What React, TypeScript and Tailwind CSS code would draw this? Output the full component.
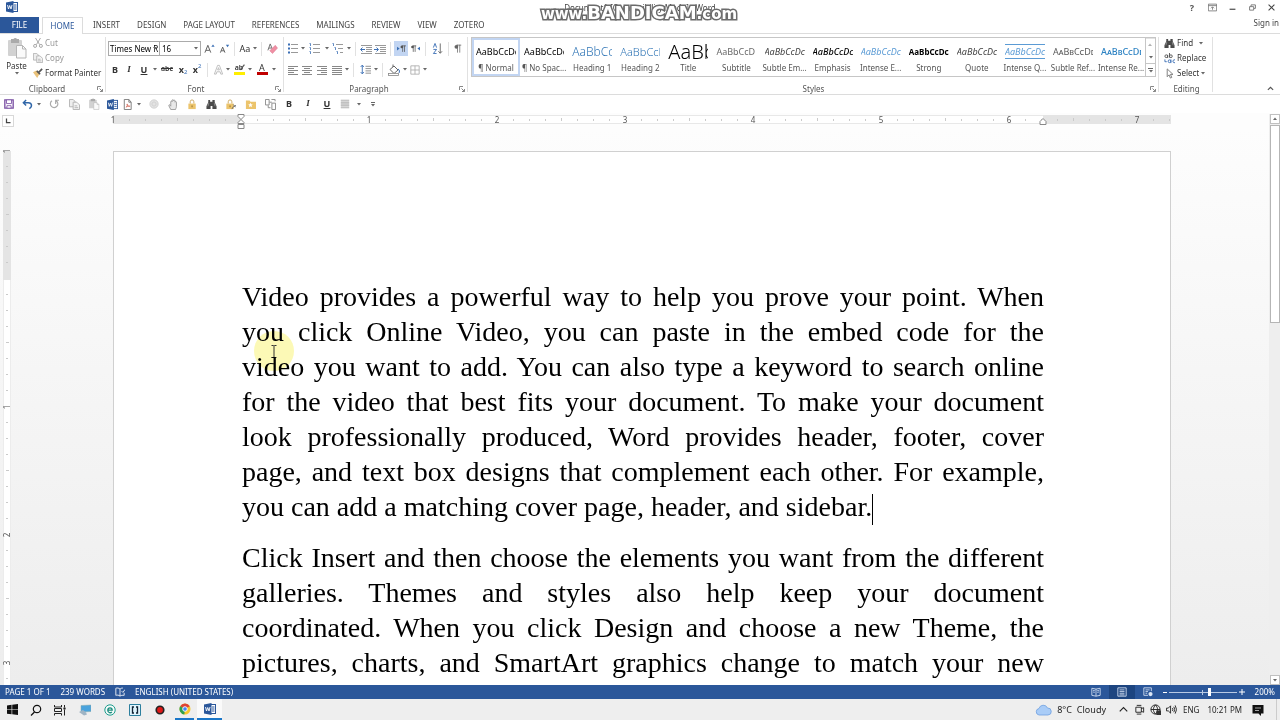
import type { ReactNode } from "react";

const TABS = ["INSERT", "DESIGN", "PAGE LAYOUT", "REFERENCES", "MAILINGS", "REVIEW", "VIEW", "ZOTERO"];

const STYLES = [
  { label: "¶ Normal", sample: "AaBbCcDc", look: "text-[9px] text-black" },
  { label: "¶ No Spac...", sample: "AaBbCcDc", look: "text-[9px] text-black" },
  { label: "Heading 1", sample: "AaBbCc", look: "text-[12px] font-light text-[#2e74b5]" },
  { label: "Heading 2", sample: "AaBbCcD", look: "text-[11px] font-light text-[#2e74b5]" },
  { label: "Title", sample: "AaBb", look: "text-[20px] font-light text-black" },
  { label: "Subtitle", sample: "AaBbCcD", look: "text-[9px] text-[#6a6a6a]" },
  { label: "Subtle Em...", sample: "AaBbCcDc", look: "text-[9px] italic text-[#404040]" },
  { label: "Emphasis", sample: "AaBbCcDc", look: "text-[9px] italic font-medium text-black" },
  { label: "Intense E...", sample: "AaBbCcDc", look: "text-[9px] italic text-[#5b9bd5]" },
  { label: "Strong", sample: "AaBbCcDc", look: "text-[8px] font-bold text-black" },
  { label: "Quote", sample: "AaBbCcDc", look: "text-[9px] italic text-[#404040]" },
  { label: "Intense Q...", sample: "AaBbCcDc", look: "text-[9px] italic text-[#5b9bd5] border-y border-[#5b9bd5]" },
  { label: "Subtle Ref...", sample: "AaBbCcDd", look: "text-[9px] [font-variant-caps:small-caps] text-[#5a5a5a]" },
  { label: "Intense Re...", sample: "AaBbCcDd", look: "text-[9px] [font-variant-caps:small-caps] font-medium text-[#2e83c3]" },
];

const PARAGRAPHS = [
  [
    "Video provides a powerful way to help you prove your point. When",
    "you click Online Video, you can paste in the embed code for the",
    "video you want to add. You can also type a keyword to search online",
    "for the video that best fits your document. To make your document",
    "look professionally produced, Word provides header, footer, cover",
    "page, and text box designs that complement each other. For example,",
    "you can add a matching cover page, header, and sidebar.",
  ],
  [
    "Click Insert and then choose the elements you want from the different",
    "galleries. Themes and styles also help keep your document",
    "coordinated. When you click Design and choose a new Theme, the",
    "pictures, charts, and SmartArt graphics change to match your new",
  ],
];

function Svg({ children, size = "size-3", box = "0 0 12 12" }: { children: ReactNode; size?: string; box?: string }) {
  return (
    <svg viewBox={box} className={`${size} shrink-0`} fill="none" stroke="#666" strokeWidth="1" aria-hidden="true">
      {children}
    </svg>
  );
}

function Tool({ name, w = "w-[14px]", on, children }: { name: string; w?: string; on?: boolean; children: ReactNode }) {
  return (
    <button
      aria-label={name}
      className={`${w} ${on ? "bg-[#c2d5f2]" : ""} h-[15px] shrink-0 flex items-center justify-center`}
    >
      {children}
    </button>
  );
}

function Caret({ name }: { name: string }) {
  return (
    <button aria-label={`${name} options`} className="w-[6px] h-[15px] shrink-0 flex items-center justify-center">
      <CaretMark />
    </button>
  );
}

function CaretMark() {
  return (
    <svg viewBox="0 0 4 3" className="w-1 h-[3px] shrink-0" aria-hidden="true">
      <path d="M0 0h4L2 2.6z" fill="#666" />
    </svg>
  );
}

function Sep() {
  return <span className="w-px h-[14px] mx-[3px] shrink-0 bg-[#e1e1e1]" />;
}

function Launcher({ name }: { name: string }) {
  return (
    <button aria-label={`${name} dialog`} className="absolute right-[3px] bottom-[2px]">
      <Svg size="size-[6px]" box="0 0 6 6">
        <path d="M.5 4V.5H4M2.5 2.5l3 3M5.5 3v2.5H3" stroke="#888" />
      </Svg>
    </button>
  );
}

function Group({ name, w, launcher, children }: { name: string; w: string; launcher?: boolean; children: ReactNode }) {
  return (
    <section className={`${w} relative h-[60px] pt-[3px] flex flex-col justify-between`}>
      {children}
      <h2 className="text-center leading-[10px] text-[#555]">{name}</h2>
      {launcher && <Launcher name={name} />}
      <span className="absolute right-0 top-[3px] bottom-[2px] w-px bg-[#e1e1e1]" />
    </section>
  );
}

function Lines({ xs }: { xs: [number, number][] }) {
  return (
    <Svg>
      {xs.map(([a, b], i) => (
        <path key={i} d={`M${a} ${2.5 + i * 2}H${b}`} stroke="#888" />
      ))}
    </Svg>
  );
}

function ListIcon({ kind }: { kind: "bullets" | "numbers" | "levels" }) {
  const indent = kind === "levels" ? [0, 2, 4] : [0, 0, 0];
  return (
    <Svg>
      {[1.5, 5.5, 9.5].map((y, i) => (
        <g key={y}>
          <path d={`M${4 + indent[i]} ${y}H11`} stroke="#999" />
          {kind === "bullets" ? (
            <rect x="1" y={y - 1} width="2" height="2" fill="#3b6fb5" stroke="none" />
          ) : (
            <path d={`M${indent[i] + 0.5} ${y - 1}h1v2.500`} stroke="#3b6fb5" strokeWidth=".8" />
          )}
        </g>
      ))}
    </Svg>
  );
}

function IndentIcon({ out }: { out?: boolean }) {
  return (
    <Svg>
      <path d="M1 2.500h11M6 4.500h6M6 6.500h6M6 8.500h6M1 10.500h11" stroke="#999" />
      <path d={out ? "M5 6.500H.8M2.500 4.500L.6 6.500l1.900 2" : "M0 6.500h4.200M2.500 4.500l1.900 2-1.900 2"} stroke="#3b6fb5" />
    </Svg>
  );
}

function CopyIcon({ size = "size-3" }: { size?: string }) {
  return (
    <Svg size={size}>
      <path d="M.5.5h4l2 2v6h-6z" fill="#eee" stroke="#b0b0b0" />
      <path d="M4.500 3.500h4l3 3v5h-7z" fill="#f4f4f4" stroke="#b0b0b0" />
      <path d="M6 7.500h3M6 9.500h4" stroke="#b0b0b0" />
    </Svg>
  );
}

function PasteIcon({ size = "size-3" }: { size?: string }) {
  return (
    <Svg size={size} box="0 0 20 22">
      <rect x="1" y="3" width="14" height="16" rx="1" fill="#d2d2d2" stroke="none" />
      <path d="M4 2h2.500a2 2 0 013.500 0H12v4H4z" fill="#aaa" stroke="none" />
      <path d="M9.500 8.500h6l3.500 3.500v9H9.500z" fill="#fafafa" stroke="#b5b5b5" />
      <path d="M15.500 8.500V12H19" stroke="#b5b5b5" />
    </Svg>
  );
}

function WordIcon({ size = "size-3" }: { size?: string }) {
  return (
    <Svg size={size}>
      <rect x="5.500" y="1.500" width="6" height="9" fill="#fff" stroke="#2b579a" />
      <path d="M8 4h2.500M8 6h2.500M8 8h2.500" stroke="#2b579a" />
      <path d="M0 1.500L7.500 0v12L0 10.500z" fill="#2b579a" stroke="none" />
      <path d="M1.500 4l1 4 1.200-3.500L5 8l1-4" stroke="#fff" strokeWidth=".9" />
    </Svg>
  );
}

function Binoculars() {
  return (
    <Svg size="size-[11px]">
      <path d="M2.500 1h2v2H7V1h2.500v2.500L11.500 8v3H7V7.500H5V11H.5V8l2-4.500z" fill="#4a4a4a" stroke="none" />
      <path d="M3 4.500L2 8M9 4.500L10 8" stroke="#bbb" strokeWidth=".6" />
    </Svg>
  );
}

function Padlock({ pen }: { pen?: boolean }) {
  return (
    <Svg size="size-[11px]">
      <path d="M3.500 5V3a2 2 0 014 0v2" stroke="#c9a55c" />
      <rect x="1.500" y="5" width="8" height="6" fill="#ecc46c" stroke="none" />
      <rect x="5" y="7" width="1" height="2" fill="#8a6a2a" stroke="none" />
      {pen && <path d="M7.500 11l1.500-2.500 3-1.500M9 6l2.500 3" stroke="#666" />}
    </Svg>
  );
}

function TitleBar() {
  return (
    <header className="relative h-[17px] flex items-start justify-between">
      <span className="pl-[6px] pt-px">
        <WordIcon />
      </span>
      <h1 className="absolute inset-x-0 top-[2px] text-center leading-[12px] text-[#444]">
        Document1 [Compatibility Mode] - Word
      </h1>
      <div className="flex">
        <Tool name="Help" w="w-[20px]">
          <span className="text-[9px] font-bold text-[#555]">?</span>
        </Tool>
        <Tool name="Ribbon display options" w="w-[20px]">
          <Svg size="size-[9px]">
            <path d="M.5 1.500h11v9H.5zM.5 3.500h11M6 9V5.500M4 7l2-2 2 2" />
          </Svg>
        </Tool>
        <Tool name="Minimize" w="w-[20px]">
          <Svg size="size-[7px]">
            <path d="M1 9h10" stroke="#444" strokeWidth="2" />
          </Svg>
        </Tool>
        <Tool name="Restore" w="w-[20px]">
          <Svg size="size-[7px]">
            <path d="M1 4.500h7v6H1zM3.500 4V1.500h7.500v6H8.500" strokeWidth="1.400" />
          </Svg>
        </Tool>
        <Tool name="Close" w="w-[18px]">
          <Svg size="size-[7px]">
            <path d="M1 1l10 10M11 1L1 11" stroke="#444" strokeWidth="1.800" />
          </Svg>
        </Tool>
      </div>
      {/* Recorder watermark sits over the window title */}
      <div className="absolute inset-x-0 top-[4px] z-10 flex items-baseline justify-center pr-[2px] font-['DejaVu_Sans',sans-serif] font-bold leading-[18px] text-white [-webkit-text-stroke:3px_#6b6b6b] [paint-order:stroke_fill]">
        <span className="text-[15px]">www.</span>
        <span className="text-[18px]">BANDICAM</span>
        <span className="text-[15px]">.com</span>
      </div>
    </header>
  );
}

function TabStrip() {
  return (
    <nav className="h-[17px] flex items-end justify-between border-b border-[#dcdcdc] text-[#444]">
      <div className="flex h-[16px]">
        <button className="w-[39px] bg-[#2b579a] text-white">FILE</button>
        <button className="w-[41px] ml-[3px] h-[17px] bg-white border border-b-0 border-[#dcdcdc] text-[#2b579a]">HOME</button>
        <div className="flex ml-[10px] gap-[17px]">
          {TABS.map((t) => (
            <button key={t}>{t}</button>
          ))}
        </div>
      </div>
      <a href="#signin" className="self-start pr-px">Sign in</a>
    </nav>
  );
}

function Clipboard() {
  return (
    <Group name="Clipboard" w="w-[106px] pr-[12px]" launcher>
      <div className="flex">
        <button className="w-[33px] shrink-0 flex flex-col items-center">
          <PasteIcon size="h-[22px] w-[20px]" />
          <span className="leading-[13px]">Paste</span>
          <CaretMark />
        </button>
        <div className="flex flex-col items-start gap-[3px] whitespace-nowrap">
          <button className="flex items-center gap-[2px] h-3 text-[#999]">
            <Svg size="size-[10px]">
              <path d="M3 0l5 8M9 0L4 8" stroke="#999" />
              <circle cx="2.500" cy="9.500" r="1.800" stroke="#999" />
              <circle cx="9.500" cy="9.500" r="1.800" stroke="#999" />
            </Svg>
            Cut
          </button>
          <button className="flex items-center gap-[2px] h-3 text-[#999]">
            <CopyIcon size="size-[10px]" />
            Copy
          </button>
          <button className="flex items-center gap-[2px] h-3">
            <Svg size="size-[10px]">
              <path d="M0 5l4-2 4 4-3 5z" fill="#eac27a" stroke="none" />
              <path d="M4.500 3.500l4 4M6.500 5.500L11 1" stroke="#555" strokeWidth="2" />
            </Svg>
            Format Painter
          </button>
        </div>
      </div>
    </Group>
  );
}

function FontGroup() {
  return (
    <Group name="Font" w="w-[178px] pl-[2px]" launcher>
      <div className="flex flex-col gap-[6px]">
        <div className="flex items-center h-[15px] mt-[4px]">
          <div className="relative">
            <select aria-label="Font name" className="appearance-none w-[52px] h-[15px] pl-px border border-[#ababab] bg-white block text-black">
              <option>Times New R</option>
            </select>
            <span className="absolute right-[3px] top-[6px] flex pointer-events-none"><CaretMark /></span>
          </div>
          <div className="relative -ml-px">
            <select aria-label="Font size" className="appearance-none w-[42px] h-[15px] pl-[2px] border border-[#ababab] bg-white block text-black">
              <option>16</option>
            </select>
            <span className="absolute right-[3px] top-[6px] flex pointer-events-none"><CaretMark /></span>
          </div>
          <Tool name="Grow font" w="w-[16px]">
            <Svg size="size-[11px]">
              <path d="M1 10.500l3.200-8 3.200 8M2.200 8h4" stroke="#555" />
              <path d="M8 4L9.800 1.500 11.600 4z" fill="#3b6fb5" stroke="none" />
            </Svg>
          </Tool>
          <Tool name="Shrink font">
            <Svg size="size-[11px]">
              <path d="M1.500 10.500l2.500-6 2.500 6M2.500 8.500h3" stroke="#555" />
              <path d="M7.500 2h3.600L9.300 4.500z" fill="#3b6fb5" stroke="none" />
            </Svg>
          </Tool>
          <Sep />
          <Tool name="Change case"><span className="text-[9px]">Aa</span></Tool>
          <Caret name="Change case" />
          <Sep />
          <Tool name="Clear formatting">
            <Svg size="size-[11px]">
              <path d="M1 8l2.500-7L6 7M2 5.500h3" stroke="#666" />
              <path d="M3 8.500L9 2.500l2.500 3L6 11.500z" fill="#ef8fa3" stroke="#d9708a" strokeWidth=".5" />
            </Svg>
          </Tool>
        </div>
        <div className="flex items-center h-[15px] text-[9px] text-[#333]">
          <Tool name="Bold"><b>B</b></Tool>
          <Tool name="Italic"><i className="font-['Liberation_Serif',serif] font-bold">I</i></Tool>
          <Tool name="Underline" w="w-[16px]"><b className="underline">U</b></Tool>
          <Caret name="Underline" />
          <Tool name="Strikethrough" w="w-[18px]"><s className="text-[7px] font-semibold">abc</s></Tool>
          <Tool name="Subscript">
            <b>x</b><span className="text-[6px] self-end text-[#3b6fb5]">2</span>
          </Tool>
          <Tool name="Superscript">
            <b>x</b><span className="text-[6px] self-start text-[#3b6fb5]">2</span>
          </Tool>
          <Sep />
          <Tool name="Text effects">
            <Svg size="size-[11px]">
              <path d="M1.500 11L5 1.500h2L10.500 11h-2L7.800 8.500H4.200L3.500 11zM5 6.500h2L6 4z" stroke="#b5b5b5" strokeWidth=".9" />
            </Svg>
          </Tool>
          <Caret name="Text effects" />
          <Tool name="Highlight" w="w-[16px]">
            <span className="relative w-[11px] h-[11px] text-[7px] leading-[7px] font-semibold border-b-[3px] border-[#ffee00]">
              ab
              <span className="absolute right-0 top-0">
                <Svg size="size-[7px]"><path d="M11 1L4 10" stroke="#555" strokeWidth="2" /></Svg>
              </span>
            </span>
          </Tool>
          <Caret name="Highlight" />
          <Tool name="Font color" w="w-[18px]">
            <span className="w-[11px] h-[11px] text-[9px] leading-[8px] border-b-[3px] border-[#c00000]">A</span>
          </Tool>
          <Caret name="Font color" />
        </div>
      </div>
    </Group>
  );
}

function ParagraphGroup() {
  return (
    <Group name="Paragraph" w="w-[184px] pl-[2px] pr-[16px]" launcher>
      <div className="flex flex-col gap-[6px]">
        <div className="flex items-center h-[15px] mt-[4px]">
          <Tool name="Bullets"><ListIcon kind="bullets" /></Tool>
          <Caret name="Bullets" />
          <Tool name="Numbering" w="w-[18px]"><ListIcon kind="numbers" /></Tool>
          <Caret name="Numbering" />
          <Tool name="Multilevel list" w="w-[16px]"><ListIcon kind="levels" /></Tool>
          <Caret name="Multilevel list" />
          <Sep />
          <Tool name="Decrease indent"><IndentIcon out /></Tool>
          <Tool name="Increase indent"><IndentIcon /></Tool>
          <Sep />
          <Tool name="Left to right" on>
            <Svg size="size-[9px]">
              <path d="M0 3.500l3.500 2.500L0 8.500z" fill="#3b6fb5" stroke="none" />
              <path d="M7.500 2v8.500M10 2v8.500M6 2.500h6" stroke="#555" />
              <circle cx="6.500" cy="4" r="1.800" fill="#555" stroke="none" />
            </Svg>
          </Tool>
          <Tool name="Right to left">
            <Svg size="size-[9px]">
              <path d="M12 3.500L8.500 6 12 8.500z" fill="#3b6fb5" stroke="none" />
              <path d="M3 2v8.500M5.500 2v8.500M2 2.500h5" stroke="#555" />
              <circle cx="2" cy="4" r="1.800" fill="#555" stroke="none" />
            </Svg>
          </Tool>
          <Sep />
          <Tool name="Sort" w="w-[16px]">
            <Svg size="size-[11px]">
              <path d="M1.500 5l1.800-4.500L5 5M1.500 7h3.500L1.500 11.500H5" stroke="#3b6fb5" />
              <path d="M9 .5v10.500M7 9l2 2.200L11 9" stroke="#666" />
            </Svg>
          </Tool>
          <Sep />
          <Tool name="Show marks" w="w-[10px]">
            <Svg size="size-[9px]">
              <path d="M6 1v10.500M9 1v10.500M4.500 1.500h6.500" stroke="#666" />
              <circle cx="4.500" cy="3.700" r="2.500" fill="#666" stroke="none" />
            </Svg>
          </Tool>
        </div>
        <div className="flex items-center h-[15px]">
          <Tool name="Align left"><Lines xs={[[1, 11], [1, 7], [1, 11], [1, 7], [1, 11]]} /></Tool>
          <Tool name="Center"><Lines xs={[[1, 11], [3, 9], [1, 11], [3, 9], [1, 11]]} /></Tool>
          <Tool name="Align right" w="w-[16px]"><Lines xs={[[1, 11], [5, 11], [1, 11], [5, 11], [1, 11]]} /></Tool>
          <Tool name="Justify"><Lines xs={[[1, 11], [1, 11], [1, 11], [1, 11], [1, 11]]} /></Tool>
          <Caret name="Justify" />
          <Sep />
          <Tool name="Line spacing" w="w-[16px]">
            <Svg size="size-[11px]">
              <path d="M2.500 1.500v9M.8 3.200L2.500 1.200l1.700 2M.8 8.800l1.700 2 1.700-2" stroke="#3b6fb5" />
              <path d="M6 2.500h6M6 5h6M6 7.500h6M6 10h6" stroke="#888" />
            </Svg>
          </Tool>
          <Caret name="Line spacing" />
          <Sep />
          <Tool name="Shading" w="w-[16px]">
            <Svg>
              <path d="M2 5.500L6 2l4 4-4 3.500zM5 3V.5" stroke="#666" />
              <path d="M10 5c2 1 1.500 3 1 4" stroke="#3b6fb5" />
              <rect x=".5" y="9.500" width="10" height="2" fill="#fff" stroke="#888" strokeWidth=".8" />
            </Svg>
          </Tool>
          <Caret name="Shading" />
          <Tool name="Borders">
            <Svg size="size-[10px]">
              <path d="M1 1h10v10H1zM6 1v10M1 6h10" stroke="#aaa" />
            </Svg>
          </Tool>
          <Caret name="Borders" />
        </div>
      </div>
    </Group>
  );
}

function StylesGroup() {
  return (
    <Group name="Styles" w="flex-1 min-w-0 px-[3px]" launcher>
      <div className="flex h-[40px] border border-[#c6c6c6]">
        {STYLES.map((s, i) => (
          <button
            key={s.label}
            className={`flex-1 min-w-0 flex flex-col items-center justify-between pt-[4px] border-2 ${i === 0 ? "border-[#c2d5f2]" : "border-transparent"}`}
          >
            <span className={`w-[40px] h-[15px] flex items-center overflow-hidden whitespace-nowrap leading-none ${s.look}`}>
              {s.sample}
            </span>
            <span className="whitespace-nowrap leading-[12px] text-[#555]">{s.label}</span>
          </button>
        ))}
        <div className="w-[10px] flex flex-col border-l border-[#c6c6c6] divide-y divide-[#c6c6c6]">
          <button aria-label="Previous styles" className="flex-1 flex items-center justify-center rotate-180 opacity-50"><CaretMark /></button>
          <button aria-label="Next styles" className="flex-1 flex items-center justify-center"><CaretMark /></button>
          <button aria-label="More styles" className="flex-1 flex flex-col items-center justify-center gap-px">
            <span className="w-[5px] h-px bg-[#666]" />
            <CaretMark />
          </button>
        </div>
      </div>
    </Group>
  );
}

function EditingGroup() {
  return (
    <Group name="Editing" w="w-[54px] pl-[5px] pr-[4px]">
      <div className="flex flex-col items-start gap-[3px]">
        <button className="flex items-center gap-[2px] h-3">
          <Binoculars />
          Find
          <span className="pl-[4px]"><CaretMark /></span>
        </button>
        <button className="flex items-center gap-[2px] h-3">
          <Svg size="size-[11px]">
            <path d="M1 3.500a1.500 1.500 0 103 0 1.500 1.500 0 10-3 0M4 2v3.500M6 0v5M6 3.500a1.500 1.500 0 103 0 1.500 1.500 0 10-3 0" stroke="#555" />
            <path d="M4.500 9a1.500 1.500 0 103 0 1.500 1.500 0 10-3 0M7.500 7v4M12 7.500c-3-1-3 4 0 3M1 7v2.500h2" stroke="#3b6fb5" />
          </Svg>
          Replace
        </button>
        <button className="flex items-center gap-[2px] h-3">
          <Svg size="size-[11px]">
            <path d="M3.500 1v8.500l2-2 1.500 3.500 1.500-.7L7 7h2.800z" fill="#fff" stroke="#777" />
          </Svg>
          Select
          <CaretMark />
        </button>
      </div>
    </Group>
  );
}

function Ribbon() {
  return (
    <div className="h-[61px] flex border-b border-[#dcdcdc]">
      <Clipboard />
      <FontGroup />
      <ParagraphGroup />
      <StylesGroup />
      <EditingGroup />
      <div className="w-[67px] flex items-end justify-end pr-[6px] pb-[2px]">
        <button aria-label="Collapse ribbon">
          <Svg size="size-[7px]"><path d="M1.500 8.500L6 4l4.500 4.500" stroke="#555" strokeWidth="2" /></Svg>
        </button>
      </div>
    </div>
  );
}

function QuickAccess() {
  return (
    <div className="h-[18px] flex items-center text-[9px] text-[#333]">
      <Tool name="Save" w="w-[18px]">
        <Svg size="size-[10px]">
          <path d="M1 1h10v10H1z" stroke="#7a4fa3" strokeWidth="1.600" />
          <path d="M3 1h6v4.500H3zM3.500 8h5v3h-5z" fill="#fff" stroke="#7a4fa3" />
        </Svg>
      </Tool>
      <Tool name="Undo" w="w-[18px]">
        <Svg size="size-[11px]">
          <path d="M4.500 1L1.500 4l3 3M2 4h5c4 0 4.500 4.500 1 6.500" stroke="#2f66a8" strokeWidth="1.600" />
        </Svg>
      </Tool>
      <Caret name="Undo" />
      <Tool name="Repeat" w="w-[24px]">
        <Svg size="size-[10px]">
          <path d="M3.500 2.200A4.500 4.500 0 108.500 2M8 6V1.500h4" stroke="#aaa" strokeWidth="1.400" />
        </Svg>
      </Tool>
      <Tool name="Copy" w="w-[16px]"><CopyIcon size="size-[11px]" /></Tool>
      <Tool name="Paste" w="w-[24px]"><PasteIcon /></Tool>
      <Tool name="Word document" w="w-[12px]"><WordIcon size="size-[11px]" /></Tool>
      <Tool name="Export PDF" w="w-[18px]">
        <Svg size="size-[11px]">
          <path d="M2.500.5h5l2.500 3v8H2.500zM7.500.5v3H10" fill="#fff" stroke="#777" />
          <path d="M4.500 9c2-2 1.500-4 1-3.500s1.500 3 3 2.500-3-.5-4 1z" stroke="#d06050" strokeWidth=".8" />
        </Svg>
      </Tool>
      <Caret name="Export" />
      <Tool name="Record" w="w-[24px]">
        <Svg size="size-[10px]">
          <circle cx="6" cy="6" r="5" fill="#e3e3e3" stroke="#cfcfcf" />
          <circle cx="6" cy="6" r="2.500" stroke="#cfcfcf" />
        </Svg>
      </Tool>
      <Tool name="Pan">
        <Svg size="size-[11px]">
          <path d="M3 11.500L1 7.500c-.5-1.500 1-1.500 1.500-.5l.5.800V3c0-1 1.500-1 1.500 0V1.500c0-1 1.600-1 1.600 0V2c0-1 1.600-1 1.600 0v1.500c0-1 1.500-1 1.500 0V8c0 2-1 2.500-1 3.500z" fill="#e9e9e9" stroke="#999" />
        </Svg>
      </Tool>
      <Tool name="Restrict editing" w="w-[24px]"><Padlock /></Tool>
      <Tool name="Find"><Binoculars /></Tool>
      <Tool name="Unlock" w="w-[24px]"><Padlock pen /></Tool>
      <Tool name="Favorites" w="w-[16px]">
        <Svg size="size-[11px]">
          <path d="M1 1.500h4l1 1.500h6v8H1z" fill="#ecc46c" stroke="none" />
          <path d="M6 4l.8 1.700 1.700.2-1.300 1.200.4 1.800L6 8l-1.600.9.4-1.800-1.300-1.200 1.700-.2z" fill="#fff" stroke="none" />
        </Svg>
      </Tool>
      <Tool name="Switch windows" w="w-[24px]">
        <Svg size="size-[11px]">
          <path d="M.5.5h4v6h-4zM5 3.500h2.500M3.500 7v2.500H6M7.500 4.500h4v7h-4zM7 .5h4v2" stroke="#888" />
        </Svg>
      </Tool>
      <Tool name="Bold"><b>B</b></Tool>
      <Tool name="Italic" w="w-[24px]"><i className="font-['Liberation_Serif',serif] font-bold">I</i></Tool>
      <Tool name="Underline"><b className="underline">U</b></Tool>
      <Tool name="Lines" w="w-[22px]">
        <Svg size="size-[10px]">
          <rect x="1" y="1" width="10" height="10" fill="#dcdcdc" stroke="none" />
          <path d="M1 1.500h10M1 4h10M1 6h10M1 8h10M1 10.500h10" stroke="#b5b5b5" />
        </Svg>
      </Tool>
      <Caret name="Lines" />
      <button aria-label="Customize toolbar" className="w-[22px] flex flex-col items-center gap-px">
        <span className="w-[4px] h-px bg-[#666]" />
        <CaretMark />
      </button>
    </div>
  );
}

// One tick every 16px, a number on every eighth
function Tick({ k, zero, vertical }: { k: number; zero: number; vertical?: boolean }) {
  const n = Math.abs(k - zero) / 8;
  return (
    <span className={`size-4 shrink-0 flex items-center justify-center ${vertical ? "-rotate-90" : ""}`}>
      {Number.isInteger(n) ? n || "" : <span className={`w-px bg-[#cacaca] ${k % 4 === 0 ? "h-[3px]" : "h-[2px]"}`} />}
    </span>
  );
}

function HorizontalRuler() {
  return (
    <div className="h-[16px] flex bg-[#fdfdfd]">
      <div className="w-[15px] pt-[2px] pl-[2px]">
        <button aria-label="Tab stop" className="size-3 border border-[#d8d8d8] bg-white flex items-center justify-center">
          <Svg size="size-[6px]"><path d="M3 1v8h8" stroke="#444" strokeWidth="2.500" /></Svg>
        </button>
      </div>
      <div className="flex-1 flex justify-center">
        <div className="relative w-[1058px] grid grid-cols-1">
          <div className="[grid-area:1/1] mt-[2px] h-[9px] flex">
            <span className="w-32 bg-[#e4e4e4]" />
            <span className="flex-1 bg-white border-y border-[#e8e8e8]" />
            <span className="w-32 bg-[#e4e4e4]" />
          </div>
          <div className="[grid-area:1/1] -ml-2 h-[13px] flex items-center leading-none text-[#555]">
            {Array.from({ length: 67 }, (_, k) => (
              <Tick key={k} k={k} zero={8} />
            ))}
          </div>
          <span className="absolute left-[124px] top-px">
            <Svg size="w-[8px] h-[15px]" box="0 0 8 15">
              <path d="M1 .5h6v2L4 5.500 1 2.500zM4 5.500l3 3v1H1v-1zM1 10.500h6v4H1z" fill="#fff" stroke="#888" />
            </Svg>
          </span>
          <span className="absolute right-[124px] top-[5px]">
            <Svg size="w-[8px] h-[7px]" box="0 0 8 7">
              <path d="M1 6.500V3.500l3-3 3 3v3z" fill="#fff" stroke="#888" />
            </Svg>
          </span>
        </div>
      </div>
      <div className="w-[11px]" />
    </div>
  );
}

function VerticalRuler() {
  return (
    <div className="w-[15px] pl-[3px] pt-[22px] flex overflow-hidden text-[#555]">
      <div className="w-[8px] shrink-0 flex flex-col">
        <span className="h-[129px] shrink-0 bg-[#e4e4e4]" />
        <span className="flex-1 bg-white border-x border-[#ececec]" />
      </div>
      <div className="-ml-3 -mt-2 w-4 shrink-0 flex flex-col items-center leading-none">
        {Array.from({ length: 34 }, (_, k) => (
          <Tick key={k} k={k} zero={8} vertical />
        ))}
      </div>
    </div>
  );
}

function ScrollBar() {
  return (
    <div className="w-[11px] -mt-[15px] flex flex-col items-center gap-px bg-[#eeeeee]">
      <button aria-label="Scroll up" className="w-[10px] h-[10px] border border-[#c0c0c0] bg-white flex items-center justify-center rotate-180">
        <CaretMark />
      </button>
      <div className="w-[10px] h-[198px] border border-[#b5b5b5] bg-white" />
      <button aria-label="Scroll down" className="w-[10px] h-[10px] mt-auto border border-[#c0c0c0] bg-white flex items-center justify-center">
        <CaretMark />
      </button>
    </div>
  );
}

function Page() {
  return (
    <article className="relative w-[1058px] mt-[22px] pl-[128px] pr-[126px] pt-[127px] border border-b-0 border-[#d0d0d0] bg-white font-['Liberation_Serif',serif] text-[28px] leading-[35px] text-black">
      {PARAGRAPHS.map((lines, p) => (
        <p key={p} className="mb-[15px]">
          {lines.map((line, i) => {
            const last = p === 0 && i === lines.length - 1;
            return (
              <span key={line} className={`block whitespace-nowrap ${last ? "" : "[text-align-last:justify]"}`}>
                {line}
                {last && <span className="inline-block w-px h-[31px] align-middle bg-black" />}
              </span>
            );
          })}
        </p>
      ))}
      {/* Mouse pointer with its highlight */}
      <span className="absolute left-[140px] top-[179px] size-10 rounded-full bg-[#f9f36e]/50 mix-blend-multiply flex items-center justify-center">
        <Svg size="w-[6px] h-[13px]" box="0 0 6 13">
          <path d="M.5.5h2l.5.5.5-.5h2M3 1v11M.5 12.500h2l.5-.5.5.5h2" stroke="#333" />
        </Svg>
      </span>
    </article>
  );
}

function StatusBar() {
  return (
    <footer className="h-[14px] shrink-0 flex items-center justify-between bg-[#2b579a] text-white px-[5px]">
      <div className="flex items-center gap-[10px]">
        <span>PAGE 1 OF 1</span>
        <span>239 WORDS</span>
        <button aria-label="Proofing">
          <Svg size="size-[10px]">
            <path d="M6 2.500C4.500 1 2.500 1 1 1.500v8.500c1.500-.5 3.500-.5 5 1V2.500c1-1 2-1.200 3.500-1.200M6 11c1-1 3-1.200 5-1V7M8 5l1.500 1.500L12 3" stroke="#fff" />
          </Svg>
        </button>
        <span>ENGLISH (UNITED STATES)</span>
      </div>
      <div className="flex items-center">
        <Tool name="Read mode" w="w-[26px]">
          <Svg size="size-[10px]">
            <path d="M6 2.500L1 1.500v8.500l5 1 5-1V1.500zM6 2.500V11M2.500 4l2 .4M2.500 6l2 .4M7.500 4.400l2-.4M7.500 6.400l2-.4" stroke="#dbe6f5" />
          </Svg>
        </Tool>
        <button aria-label="Print layout" className="w-[26px] h-[14px] bg-[#1d4580] flex items-center justify-center">
          <Svg size="size-[10px]">
            <path d="M1 1h10v10H1zM3 3.500h6M3 5.500h6M3 7.500h6M3 9.500h6" stroke="#dbe6f5" />
          </Svg>
        </button>
        <Tool name="Web layout" w="w-[26px]">
          <Svg size="size-[10px]">
            <path d="M6 10H1V1h9v4M3 3.500h5M3 5.500h3M3 7.500h2" stroke="#dbe6f5" />
            <circle cx="9" cy="8.500" r="2.500" fill="#dbe6f5" stroke="none" />
          </Svg>
        </Tool>
        <button aria-label="Zoom out" className="w-[8px] flex justify-center">
          <span className="w-[4px] h-px bg-white" />
        </button>
        <input
          type="range"
          aria-label="Zoom"
          min={0}
          max={100}
          defaultValue={61}
          className="w-[68px] h-[9px] appearance-none bg-[linear-gradient(#b9cae4,#b9cae4),linear-gradient(#b9cae4,#b9cae4)] bg-[size:100%_1px,1px_5px] bg-center bg-no-repeat [&::-webkit-slider-thumb]:appearance-none [&::-webkit-slider-thumb]:w-[3px] [&::-webkit-slider-thumb]:h-[8px] [&::-webkit-slider-thumb]:bg-white"
        />
        <button aria-label="Zoom in" className="w-[10px] flex justify-center">
          <Svg size="size-[6px]" box="0 0 6 6"><path d="M0 3h6M3 0v6" stroke="#fff" /></Svg>
        </button>
        <span className="pl-[8px]">200%</span>
      </div>
    </footer>
  );
}

function TaskBar() {
  return (
    <div className="h-[21px] shrink-0 flex justify-between bg-[#eeeeee] text-[9px] text-[#222]">
      <div className="flex">
        <button aria-label="Start" className="w-6 flex items-center justify-center">
          <Svg size="size-[11px]">
            <path d="M0 1.500l5-.7V5.700H0zM5.700.7L12 0v5.700H5.700zM0 6.300h5v4.900l-5-.7zM5.700 6.300H12V12l-6.300-.8z" fill="#111" stroke="none" />
          </Svg>
        </button>
        <button aria-label="Search" className="w-6 flex items-center justify-center">
          <Svg><circle cx="7" cy="5" r="3.700" stroke="#111" strokeWidth="1.200" /><path d="M4.500 8L1 11.500" stroke="#111" strokeWidth="1.200" /></Svg>
        </button>
        <button aria-label="Task view" className="w-6 flex items-center justify-center">
          <Svg><path d="M.5 1v2h7V1M.5 4.500h7v3h-7zM.5 11.500v-2h7v2M10.500 1v10.500" stroke="#222" /><circle cx="10.500" cy="4.500" r="1" fill="#222" /></Svg>
        </button>
        <button aria-label="Remote desktop" className="w-[25px] flex items-center justify-center">
          <Svg><path d="M2 1.500L12 1v6.500L2 8z" fill="#4aa3dd" stroke="#8aa" strokeWidth=".5" /><path d="M0 8l4-2 3 2.500 1 2-3 1z" fill="#9fb4c4" stroke="none" /></Svg>
        </button>
        <button aria-label="Browser" className="w-[25px] flex items-center justify-center">
          <Svg><circle cx="6" cy="6" r="5.200" fill="#f4fbfa" stroke="#1b9c8c" /><path d="M3.800 6.200h4.400c0-3-4.400-3-4.400 0s3 3 4 1.600" stroke="#1b8c7c" strokeWidth="1.300" /></Svg>
        </button>
        <button aria-label="Brackets" className="w-[25px] flex items-center justify-center">
          <Svg><path d="M.5.5h11v11H.5z" fill="#dff3fb" stroke="#2c7f9e" /><path d="M5 3H3.500v6H5M7 3h1.500v6H7" stroke="#123" strokeWidth="1.300" /></Svg>
        </button>
        <button aria-label="Recorder" className="w-[25px] flex items-center justify-center">
          <Svg size="size-[10px]"><circle cx="6" cy="6" r="4.500" fill="#e01818" stroke="#222" strokeWidth="2" /></Svg>
        </button>
        <button aria-label="Chrome" className="w-[25px] px-[3px] flex flex-col items-center justify-between">
          <span className="pt-[4px]">
            <Svg>
              <circle cx="6" cy="6" r="5.500" fill="#f6c62c" stroke="none" />
              <path d="M6 6L1.200 3.300A5.500 5.500 0 0110.800 3.300z" fill="#df4335" stroke="none" />
              <path d="M6 6L1.200 3.300A5.500 5.500 0 005.300 11.500z" fill="#2da04f" stroke="none" />
              <circle cx="6" cy="6" r="2.300" fill="#4285f4" stroke="#fff" strokeWidth=".9" />
            </Svg>
          </span>
          <span className="w-full h-[2px] bg-[#1a76c8]" />
        </button>
        <button aria-label="Word" className="w-[25px] flex items-center justify-center border-b-2 border-[#1a76c8] bg-[#fafafa]">
          <WordIcon />
        </button>
      </div>
      <div className="flex items-center pr-[3px]">
        <a href="#weather" className="flex items-center gap-[5px]">
          <svg viewBox="0 0 17 12" className="w-[17px] h-[12px]" aria-hidden="true">
            <path d="M4 11a3.300 3.300 0 010-6.500A4.500 4.500 0 0112.500 4a3.500 3.500 0 01.5 7z" fill="#a9ccf7" stroke="#6f9fe0" strokeWidth=".8" />
          </svg>
          <span>8°C</span>
          <span>Cloudy</span>
        </a>
        <div className="flex items-center ml-[9px]">
          <Tool name="Hidden icons" w="w-[16px]"><Svg size="size-[9px]"><path d="M1 8.500L6 3.500l5 5" stroke="#222" strokeWidth="1.500" /></Svg></Tool>
          <Tool name="Camera" w="w-[16px]"><Svg size="size-[11px]"><path d="M2 3.500h6v5.500H2zM8 5l2.500-1v5L8 8M3 1.500h5M3 11h5" stroke="#222" /></Svg></Tool>
          <Tool name="Network" w="w-[16px]">
            <Svg size="size-[11px]"><circle cx="6" cy="6" r="5" stroke="#222" /><path d="M1 6h10M6 1c-3 3-3 7 0 10M6 1c3 3 3 7 0 10" stroke="#222" /><path d="M7 7h5v5H7z" fill="#333" stroke="none" /></Svg>
          </Tool>
          <Tool name="Volume" w="w-[16px]"><Svg size="size-[11px]"><path d="M.5 4.500H2.500L5 2v8L2.500 7.500H.5zM7 4.500q1 1.500 0 3M8.500 3q2 3 0 6M10 1.500q3 4.500 0 9" stroke="#222" /></Svg></Tool>
        </div>
        <span className="ml-[4px] text-[8px]">ENG</span>
        <time className="ml-[8px] text-[8px]">10:21 PM</time>
        <button aria-label="Notifications" className="w-[20px] ml-[6px] flex items-center justify-center">
          <Svg><path d="M.5 1h11v8.500H9V12L6.500 9.500h-6z" fill="#111" stroke="none" /><path d="M3 4h6M3 6.500h4" stroke="#ccc" strokeWidth=".8" /></Svg>
        </button>
        <span className="w-px h-full ml-[8px] bg-[#ccc]" />
      </div>
    </div>
  );
}

export default function App() {
  return (
    <div className="h-screen flex flex-col overflow-hidden bg-white font-['Noto_Sans',sans-serif] text-[8px] text-[#333]">
      <TitleBar />
      <TabStrip />
      <Ribbon />
      <QuickAccess />
      <HorizontalRuler />
      <main className="flex-1 min-h-0 flex bg-linear-to-b from-[#fdfdfd] to-[#ededed]">
        <VerticalRuler />
        <div className="flex-1 flex justify-center overflow-hidden">
          <Page />
        </div>
        <ScrollBar />
      </main>
      <StatusBar />
      <TaskBar />
    </div>
  );
}
